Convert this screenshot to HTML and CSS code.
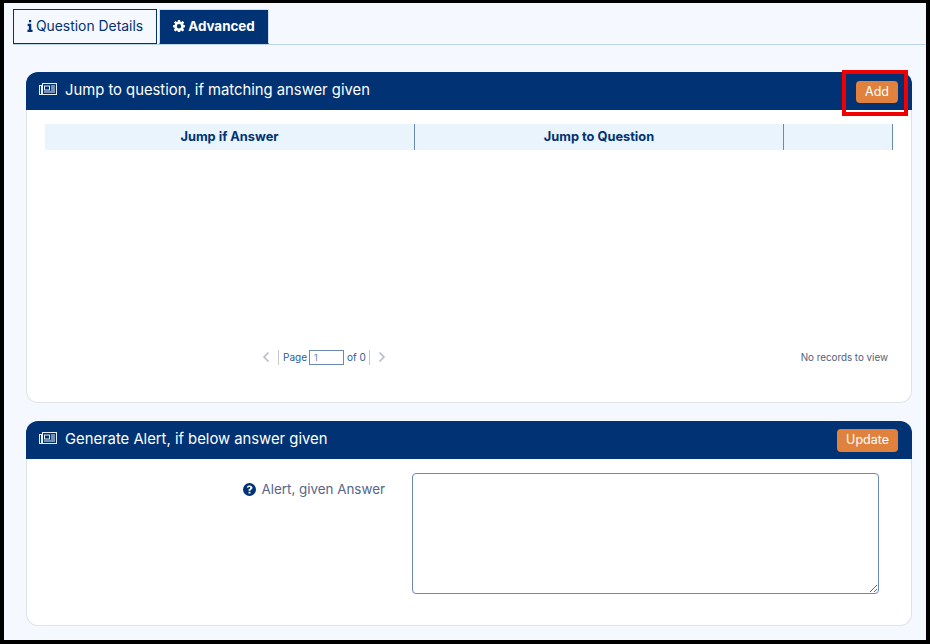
FILE: index.html
```html
<!DOCTYPE html>
<html lang="en">
<head>
  <meta charset="UTF-8" />
  <title>Question Advanced</title>
  <link rel="stylesheet" href="styles.css">
</head>
<body>
  <div class="frame">

    <nav class="tabs">
      <a class="tab" href="#">
        <svg class="tab-icon" viewBox="0 0 8 16" width="6" height="12"><path d="M2.6 0h3v3h-3zM.8 5h4.9v8H7.4v3H.6v-3h1.8V8H.8z" fill="currentColor"/></svg>
        Question Details
      </a>
      <a class="tab active" href="#">
        <svg class="tab-icon" viewBox="0 0 16 16" width="12" height="12"><path fill-rule="evenodd" fill="currentColor" d="M6.6 0h2.8l.4 2.2 1.2.5L12.9 1.4l2 2-1.3 1.9.5 1.2 2.2.4v2.8l-2.2.4-.5 1.2 1.3 1.9-2 2-1.9-1.3-1.2.5-.4 2.2H6.6l-.4-2.2-1.2-.5-1.9 1.3-2-2 1.3-1.9-.5-1.2L0 9.7V6.9l2.2-.4.5-1.2-1.3-1.9 2-2L5 2.7l1.2-.5zM8 5.4a2.9 2.9 0 1 0 0 5.8 2.9 2.9 0 0 0 0-5.8z"/></svg>
        Advanced
      </a>
    </nav>

    <section class="panel panel-jump">
      <header class="panel-head">
        <svg class="news-icon" viewBox="0 0 18 12" width="18" height="12"><path fill-rule="evenodd" fill="currentColor" d="M3 0h15v12H0V2h3zM1 3v8h1V3zM4 1v10h13V1zM5 2.500h6v5H5zM6 3.500v3h4v-3zM12 2.500h4v1h-4zM12 4.500h4v1h-4zM12 6.500h4v1h-4zM5 8.500h11v1H5z"/></svg>
        <h2>Jump to question, if matching answer given</h2>
        <button class="btn btn-add">Add</button>
        <span class="callout"></span>
      </header>
      <div class="panel-body">
        <div class="grid-head">
          <div class="grid-col col-answer">Jump if Answer</div>
          <div class="grid-col col-question">Jump to Question</div>
          <div class="grid-col col-action"></div>
        </div>
        <div class="grid-rows"></div>
        <div class="pager">
          <div class="pager-mid">
            <svg class="chev" viewBox="0 0 8 12" width="8" height="12"><polyline points="6.500 1.500 2 6 6.500 10.500"/></svg>
            <span class="sep"></span>
            <span>Page</span>
            <input class="page-input" type="text" value="1">
            <span>of 0</span>
            <span class="sep sep-right"></span>
            <svg class="chev chev-next" viewBox="0 0 8 12" width="8" height="12"><polyline points="1.500 1.500 6 6 1.500 10.500"/></svg>
          </div>
          <div class="pager-info">No records to view</div>
        </div>
      </div>
    </section>

    <section class="panel panel-alert">
      <header class="panel-head">
        <svg class="news-icon" viewBox="0 0 18 12" width="18" height="12"><path fill-rule="evenodd" fill="currentColor" d="M3 0h15v12H0V2h3zM1 3v8h1V3zM4 1v10h13V1zM5 2.500h6v5H5zM6 3.500v3h4v-3zM12 2.500h4v1h-4zM12 4.500h4v1h-4zM12 6.500h4v1h-4zM5 8.500h11v1H5z"/></svg>
        <h2>Generate Alert, if below answer given</h2>
        <button class="btn">Update</button>
      </header>
      <div class="panel-body alert-body">
        <label class="alert-label">
          <svg class="help-icon" viewBox="0 0 16 16" width="13" height="13"><path fill-rule="evenodd" fill="currentColor" d="M8 0a8 8 0 1 1 0 16A8 8 0 0 1 8 0zM8.200 3C6.500 3 5.300 3.800 4.600 5l1.400 1c.5-.6.900-1 1.800-1 .7 0 1.300.4 1.300 1 0 .5-.4.8-1 1.100C7.200 7.500 6.800 8.100 6.800 9v.6h2.400v-.4c0-.5.400-.8 1-1.100.8-.5 1.500-1.100 1.500-2.200C11.700 4.200 10 3 8.200 3zM6.800 10.700V13h2.400v-2.300z"/></svg>
          Alert, given Answer
        </label>
        <textarea class="alert-text"></textarea>
      </div>
    </section>

  </div>
</body>
</html>
```

FILE: styles.css
```css
:root {
  --navy: #003274;
  --orange: #e0823d;
  --line: #6a8ab5;
}

* {
  box-sizing: border-box;
}

html, body {
  margin: 0;
  height: 644px;
  overflow: hidden;
}

body {
  font-family: Inter, 'Liberation Sans', Arial, sans-serif;
  color: var(--navy);
}

.frame {
  height: 644px;
  border: solid #000;
  border-width: 3px 4px 4px 4px;
  background: #f5f9ff;
  padding-top: 6px;
}

.tabs {
  display: flex;
  gap: 2px;
  margin-left: 9px;
  height: 36px;
  border-bottom: 1px solid #bdd3e8;
}

.tab {
  display: flex;
  align-items: center;
  justify-content: center;
  gap: 3px;
  height: 35px;
  padding-bottom: 1px;
  border: 1px solid var(--navy);
  color: var(--navy);
  text-decoration: none;
  font-size: 13.900px;
  width: 144px;
}

.tab.active {
  width: 110px;
  background: var(--navy);
  color: #fff;
  font-size: 13.400px;
  font-weight: 700;
  border-color: #cfdfee;
  border-bottom-color: var(--navy);
}

.panel {
  position: relative;
  margin: 0 14px 0 22px;
  background: #fff;
  border: 1px solid #dfe3e8;
  border-top: 0;
  border-radius: 12px;
}

.panel-jump {
  margin-top: 27px;
  height: 331px;
}

.panel-alert {
  margin-top: 18px;
  height: 205px;
}

.panel-head {
  display: flex;
  align-items: center;
  height: 38px;
  margin: 0 -1px;
  padding: 0 14px 0 13px;
  background: var(--navy);
  color: #fff;
  border-radius: 12px 12px 0 0;
}

.news-icon {
  flex: none;
  margin: 0 8px 5px 0;
  color: #e8eef6;
}

.panel-head h2 {
  flex: 1;
  margin: 0;
  padding-bottom: 2px;
  font-size: 14.800px;
  font-weight: 400;
}

.btn {
  height: 23px;
  margin-top: 1px;
  padding: 0 9px 2px;
  border: 0;
  border-radius: 4px;
  background: var(--orange);
  color: #fff;
  font-family: inherit;
  font-size: 12.500px;
}

.btn-add {
  height: 22px;
  margin-top: 2px;
}

/* red annotation box around the Add button */
.callout {
  position: absolute;
  left: 815px;
  top: -2px;
  width: 66px;
  height: 46px;
  border: 4px solid #f00000;
}

.panel-body {
  padding: 14px 18px 0;
}

.grid-head {
  display: grid;
  grid-template-columns: 370px 369px 109px;
  height: 26px;
  padding-bottom: 2px;
  background: #eaf4fd;
  font-size: 12.800px;
  font-weight: 700;
}

.grid-col {
  display: flex;
  align-items: center;
  justify-content: center;
  margin-bottom: -2px;
  padding-bottom: 2px;
  border-right: 1px solid var(--line);
}

.grid-rows {
  height: 191px;
}

.pager {
  display: flex;
  align-items: center;
  height: 32px;
  font-size: 10px;
  position: relative;
}

.pager-mid {
  display: flex;
  align-items: center;
  margin-left: 217px;
  color: #2c5c8f;
}

.chev {
  fill: none;
  stroke: #b3bac4;
  stroke-width: 1.500;
  margin-right: 8px;
}

.chev-next {
  margin: 0 0 0 8px;
}

.sep {
  width: 1px;
  height: 15px;
  background: #c8c8c8;
  margin-right: 4px;
}

.sep-right {
  margin: 0 0 0 3px;
}

.page-input {
  width: 35px;
  height: 15px;
  margin: 0 3px 0 2px;
  padding: 0 4px;
  border: 1px solid var(--line);
  border-radius: 0;
  outline: 0;
  font-family: inherit;
  font-size: 9px;
  color: #5f7fa8;
}

.pager-info {
  margin-left: auto;
  margin-right: 5px;
  font-size: 9.800px;
  color: #55607a;
}

.alert-body {
  display: flex;
  align-items: flex-start;
  padding: 14px 32px 0 0;
}

.alert-label {
  display: flex;
  align-items: center;
  justify-content: flex-end;
  gap: 5px;
  width: 358px;
  margin-top: 8px;
  font-size: 13.400px;
  color: #55658a;
}

.help-icon {
  color: var(--navy);
}

.alert-text {
  flex: 1;
  height: 121px;
  margin-left: 27px;
  border: 1px solid var(--line);
  border-radius: 4px;
  background: #fff;
  outline: 0;
}
```
